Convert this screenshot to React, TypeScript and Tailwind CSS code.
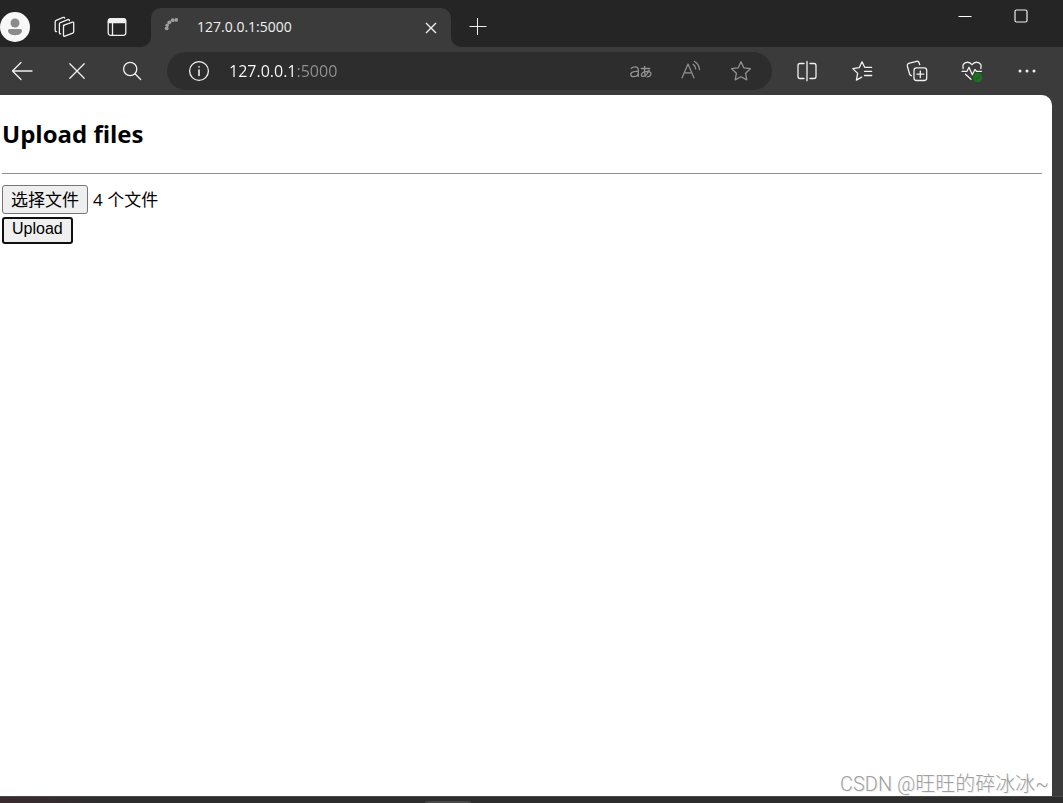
import type { ReactNode } from "react";

type IconButtonProps = { label: string; className?: string; children: ReactNode };

function IconButton({ label, className = "h-9 w-11", children }: IconButtonProps) {
  return (
    <button type="button" aria-label={label} className={`flex shrink-0 items-center justify-center ${className}`}>
      {children}
    </button>
  );
}

function Icon({ children, className = "size-6", width = 1.3 }: { children: ReactNode; className?: string; width?: number }) {
  return (
    <svg
      viewBox="0 0 24 24"
      className={`shrink-0 ${className}`}
      fill="none"
      stroke="currentColor"
      strokeWidth={width}
      strokeLinecap="round"
      strokeLinejoin="round"
      aria-hidden="true"
    >
      {children}
    </svg>
  );
}

function TabStrip() {
  return (
    <header className="flex h-[47px] items-end bg-[#252525] text-[#f0f0f0]">
      <div className="flex h-10 flex-none items-center">
        <IconButton label="Profile" className="h-10 w-[30px]">
          <svg viewBox="0 0 30 30" className="size-[30px]" aria-hidden="true">
            <circle cx="15" cy="15" r="15" fill="#f7f7f7" />
            <circle cx="15" cy="11" r="4.5" fill="#8b8b8b" />
            <path d="M8 18.500Q8 17 9.500 17h11q1.500 0 1.500 1.500c0 3-3 4.700-7 4.700s-7-1.700-7-4.700z" fill="#8b8b8b" />
          </svg>
        </IconButton>
        <IconButton label="Workspaces" className="ml-3 h-10 w-11">
          <Icon>
            <path d="M11.300 10.300 20.500 7.200q1.200-.3 1.200 1v8.500q0 1-1 1.400l-7.800 3q-1.400.5-1.400-.9v-8.300q0-1.200.9-1.500z" />
            <path d="M8.700 18.800q-1.300.3-1.300-1V9.100q0-1.100 1-1.500l7.500-3q1.300-.4 1.500.9" />
            <path d="M4.500 16.600q-1.300.2-1.300-1.100V6.800q0-1.100 1-1.500l7-2.900q1.200-.4 1.500.7" />
          </Icon>
        </IconButton>
        <IconButton label="Tab actions" className="ml-[9px] h-10 w-11">
          <Icon>
            <rect x="3.200" y="3.700" width="17.600" height="16.600" rx="2.500" />
            <path d="M3.500 7.500V6q0-2 2-2h13q2 0 2 2v1.500z" fill="currentColor" />
            <path d="M7.500 8v12" />
          </Icon>
        </IconButton>
      </div>
      <div className="ml-0.5 size-[10px] bg-[#3b3b3b]">
        <div className="size-full rounded-br-[10px] bg-[#252525]" />
      </div>
      <div className="flex h-[39px] w-[300px] items-center rounded-t-[10px] bg-[#3b3b3b] pr-1 pl-3">
        <svg viewBox="0 0 20 20" className="size-5 shrink-0 fill-[#a0a0a0]" aria-hidden="true">
          <circle cx="3.700" cy="10.300" r="1.900" />
          <circle cx="4.200" cy="7.200" r="1.800" />
          <circle cx="6.300" cy="4.300" r="1.900" />
          <circle cx="9.700" cy="2.200" r="1.900" />
          <circle cx="13.200" cy="1.900" r="1.900" />
        </svg>
        <span className="ml-3.5 flex-1 pb-0.5 text-sm">127.0.0.1:5000</span>
        <IconButton label="Close tab" className="size-8">
          <svg viewBox="0 0 12 12" className="size-3" fill="none" stroke="currentColor" strokeWidth="1.400" aria-hidden="true">
            <path d="m1 1 10 10M11 1 1 11" />
          </svg>
        </IconButton>
      </div>
      <div className="size-[10px] bg-[#3b3b3b]">
        <div className="size-full rounded-bl-[10px] bg-[#252525]" />
      </div>
      <IconButton label="New tab" className="h-10 w-[34px]">
        <svg viewBox="0 0 18 18" className="size-[18px]" fill="none" stroke="currentColor" aria-hidden="true">
          <path d="M.5 8.500h17M8.500 0v17" />
        </svg>
      </IconButton>
      <div className="ml-auto flex self-start pr-[14px]">
        <IconButton label="Minimize" className="h-8 w-14">
          <svg viewBox="0 0 14 14" className="size-3.5" fill="none" stroke="#ffffff" aria-hidden="true">
            <path d="M.5 7.500h13" />
          </svg>
        </IconButton>
        <IconButton label="Maximize" className="h-8 w-14">
          <svg viewBox="0 0 14 14" className="size-3.5" fill="none" stroke="currentColor" strokeWidth="1.200" aria-hidden="true">
            <rect x="1" y="1" width="12" height="12" rx="1.500" />
          </svg>
        </IconButton>
      </div>
    </header>
  );
}

function Toolbar() {
  return (
    <nav aria-label="Toolbar" className="flex h-12 items-center gap-[11px] bg-[#3b3b3b] pr-[14px] text-[#f0f0f0]">
      <IconButton label="Back">
        <Icon>
          <path d="M22 12H2.500M11 3.500 2.500 12l8.500 8.500" />
        </Icon>
      </IconButton>
      <IconButton label="Stop">
        <Icon>
          <path d="m4.800 4.800 14.400 14.400M19.200 4.800 4.800 19.200" />
        </Icon>
      </IconButton>
      <IconButton label="Search">
        <Icon>
          <circle cx="10.200" cy="10" r="6.600" />
          <path d="m15 14.800 5.700 5.700" />
        </Icon>
      </IconButton>
      <div className="mx-0.5 flex h-[38px] min-w-0 flex-1 items-center rounded-full bg-[#2d2d2d] pr-[9px] pl-2.5 text-[#929292]">
        <IconButton label="Site information">
          <Icon className="size-6 text-[#f0f0f0]">
            <circle cx="12" cy="12" r="9.400" />
            <path d="M12 11v5.500M12 7.800v.2" strokeWidth="1.600" />
          </Icon>
        </IconButton>
        <input
          type="text"
          aria-label="Address"
          defaultValue="127.0.0.1:5000"
          className="ml-2 min-w-0 flex-1 bg-[linear-gradient(to_right,#ffffff_67px,#929292_67px)] bg-clip-text text-base text-transparent outline-none"
        />
        <div className="flex gap-1.5">
          <IconButton label="Translate">
            <Icon>
              <path d="M2.300 9.200q1.500-1.400 3.800-1.400 3.200 0 3.200 3.200v6.400M9.300 12.200l-4 .4q-3.500.4-3.500 2.800 0 2.300 2.800 2.300 4.700-.2 4.700-4.300" />
              <path d="M12.300 9.500h8.400M15.600 7.400q-.5 5.600.7 10M20 11.200q-2.300 5.800-5.700 6.200-2.300.1-1.800-1.900.8-2.700 5.200-3.100 4.400 0 4.300 2.600-.2 2.500-3.700 2.900" />
            </Icon>
          </IconButton>
          <IconButton label="Read aloud">
            <Icon width={1.2}>
              <path d="m3 19 6-14 6 14M5.200 13.800h7.600M14.200 5.300q2.300 1.800 2.500 4.700M15.500 2.500q4.700 2.700 5 8.200" />
            </Icon>
          </IconButton>
          <IconButton label="Add to favorites">
            <Icon>
              <path d="m12 2.800 2.800 6 6.600.9-4.800 4.600 1.200 6.600-5.800-3.200-5.800 3.200 1.200-6.600-4.800-4.600 6.600-.9z" />
            </Icon>
          </IconButton>
        </div>
      </div>
      <IconButton label="Split screen">
        <Icon>
          <path d="M12 2.300v19.400M9 4.500H5q-2 0-2 2v11q0 2 2 2h4M15 4.500h4q2 0 2 2v11q0 2-2 2h-4" />
        </Icon>
      </IconButton>
      <IconButton label="Favorites">
        <Icon>
          <path d="M21.700 8.300h-7L12 2.800 9.200 8.700l-6.400.9 4.900 4.800-1.300 6.700 5.300-3M14.500 12.300h7.200M14.500 16.500h7.200" />
        </Icon>
      </IconButton>
      <IconButton label="Collections">
        <Icon>
          <rect x="9" y="8.800" width="12.700" height="12.700" rx="2.500" />
          <path d="M15.300 11.800v6.800M11.900 15.200h6.800M6.500 16.700Q5 16.500 4.600 15L2.300 7q-.4-2 1.300-2.600L11.500 2.300q2-.4 2.600 1.400l.6 2" />
        </Icon>
      </IconButton>
      <IconButton label="Browser essentials">
        <Icon>
          <path d="M3.200 9.500C1.600 3.500 8.300 1.200 12 5.700c3.700-4.500 10.500-2.200 8.800 3.800M2 12.300h5l2-4 3.300 7.400 2.700-5.200 1.500 1.800h5M5.500 15.200l5.500 5" />
          <circle cx="17.700" cy="18.700" r="4.600" fill="#16761b" stroke="none" />
          <path d="m15.800 19 1.200 1.100 2.800-2.800" stroke="#35502f" />
        </Icon>
      </IconButton>
      <IconButton label="Settings and more">
        <svg viewBox="0 0 20 20" className="size-5 fill-current" aria-hidden="true">
          <circle cx="3" cy="10" r="1.500" />
          <circle cx="10" cy="10" r="1.500" />
          <circle cx="17" cy="10" r="1.500" />
        </svg>
      </IconButton>
    </nav>
  );
}

function UploadPage() {
  return (
    <main className="relative mr-[11px] flex-1 rounded-tr-[10px] bg-white pt-[23px] pr-2.5 pl-0.5 text-black">
      <h1 className="text-2xl leading-8 font-bold">Upload files</h1>
      <hr className="mt-[23px] mb-[11px] border-t border-[#8f8f8f]" />
      <form className="flex flex-col items-start gap-[3px]" onSubmit={(event) => event.preventDefault()}>
        <div className="flex items-center gap-[5px]">
          <label
            htmlFor="files"
            className="flex h-[29px] items-center rounded-[3px] border border-[#767676] bg-[#efefef] px-2 text-[17px] leading-6"
          >
            选择文件
          </label>
          <input id="files" type="file" multiple className="sr-only" />
          <span className="text-[17px] leading-6">4 个文件</span>
        </div>
        <button
          type="submit"
          className="flex h-[27px] items-start rounded-[3px] border-2 border-[#101010] bg-[#efefef] px-2 font-['Liberation_Sans',sans-serif] text-base leading-5"
        >
          Upload
        </button>
      </form>
      <p className="absolute right-[3px] bottom-0 text-xl leading-6 font-light text-[#a0a0a0] [font-family:Roboto,'Noto_Sans_CJK_SC',sans-serif] [text-shadow:1px_1px_0_#eeeeee]">
        CSDN @旺旺的碎冰冰~
      </p>
    </main>
  );
}

export default function App() {
  return (
    <div className="flex min-h-screen flex-col bg-[#3b3b3b] font-['Open_Sans','Noto_Sans_CJK_SC',sans-serif]">
      <TabStrip />
      <Toolbar />
      <UploadPage />
      <footer className="flex h-[7px] items-end justify-start border-t border-[#484848] bg-linear-to-r from-[#3a2a30] via-[#2d2d2d] via-10% to-[#2d2d2d] pl-[425px]">
        <div className="h-0.5 w-[46px] rounded-t-sm bg-[#484848]" />
      </footer>
    </div>
  );
}
